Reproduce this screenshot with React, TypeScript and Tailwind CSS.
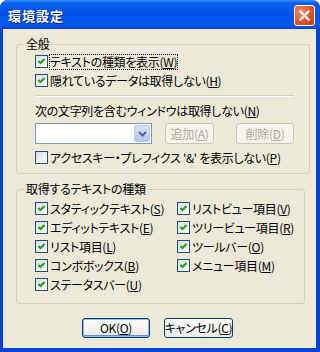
import React from "react";

const font = "[font-family:'Noto_Sans_CJK_JP','Noto_Sans',sans-serif] [font-feature-settings:'palt']";

function Check({ checked }: { checked: boolean }) {
  return (
    <span className="w-[13px] h-[13px] shrink-0 border border-[#1C5180] bg-gradient-to-br from-[#DCDCD7] to-white flex items-center justify-center">
      {checked && (
        <svg width="9" height="9" viewBox="0 0 9 9">
          <polyline points="1.5,4 3.5,6 7.5,2" fill="none" stroke="#21A121" strokeWidth="2.2" />
        </svg>
      )}
    </span>
  );
}

function Label({ text, k, focus }: { text: string; k: string; focus?: boolean }) {
  return (
    <span className={`ml-[2px] leading-[14px] whitespace-nowrap ${focus ? "outline outline-1 outline-dotted outline-black" : ""}`}>
      {text}(<span className="underline underline-offset-[1px]">{k}</span>)
    </span>
  );
}

function Row({ checked, text, k, focus }: { checked: boolean; text: string; k: string; focus?: boolean }) {
  return (
    <div className="h-[19px] flex items-center">
      <Check checked={checked} />
      <Label text={text} k={k} focus={focus} />
    </div>
  );
}

export default function App() {
  return (
    <div className={`w-[320px] h-[352px] bg-white ${font} text-[12px] tracking-[-0.3px] text-black`}>
      <div className="w-full h-full flex flex-col rounded-t-[8px] overflow-hidden bg-[#0842D4]">
        {/* Title bar */}
        <div className="h-[29px] shrink-0 flex items-center pl-[8px] pr-[5px] bg-[linear-gradient(180deg,#3D95FF_0%,#0A5FEE_10%,#0053E6_45%,#0058EE_80%,#0552E0_92%,#003DD7_100%)]">
          <span className="text-white font-bold text-[13px] tracking-[1px] [text-shadow:1px_1px_0_#0A1E8C] leading-none mt-[1px]">環境設定</span>
          <div className="ml-auto w-[21px] h-[21px] rounded-[3px] border border-white bg-[radial-gradient(circle_at_30%_30%,#F08F6A,#E2532C_55%,#C43C1A)] flex items-center justify-center mt-[2px]">
            <svg width="11" height="11" viewBox="0 0 11 11">
              <path d="M1.5 1.5 L9.5 9.5 M9.5 1.5 L1.5 9.5" stroke="white" strokeWidth="2.2" strokeLinecap="square" />
            </svg>
          </div>
        </div>
        {/* Client area */}
        <div className="flex-1 ml-[3px] mr-[4px] mb-[4px] bg-[#ECE9D8] flex flex-col">
          {/* Group 1 */}
          <fieldset className="mt-[8px] ml-[13px] w-[289px] h-[137px] border border-[#D0D0BF] rounded-[3px] pl-[18px] pr-[15px]">
            <legend className="px-[2px] leading-[14px]" style={{ marginLeft: -11 }}>全般</legend>
            <div className="mt-[1px]">
              <Row checked text="テキストの種類を表示" k="W" focus />
              <Row checked text="隠れているデータは取得しない" k="H" />
            </div>
            <div className="mt-[5px] h-[2px] border-t border-[#D0D0BF] border-b border-b-white" />
            <div className="h-[19px] mt-[4px] flex items-center leading-[14px] whitespace-nowrap">
              次の文字列を含むウィンドウは取得しない(<span className="underline underline-offset-[1px]">N</span>)
            </div>
            <div className="mt-[3px] flex items-center">
              <div className="w-[117px] h-[21px] border border-[#7F9DB9] bg-white flex justify-end p-[1px]">
                <div className="w-[16px] h-full rounded-[2px] border border-[#B9CBF5] bg-gradient-to-b from-[#D6E3FC] to-[#B3C8F5] flex items-center justify-center">
                  <svg width="9" height="6" viewBox="0 0 9 6">
                    <polyline points="1,1 4.5,4.5 8,1" fill="none" stroke="#4D6185" strokeWidth="2" />
                  </svg>
                </div>
              </div>
              <div className="ml-[13px] w-[49px] h-[21px] rounded-[3px] border border-[#C9C7BA] bg-[#F5F4EA] text-[#ACA899] flex items-center justify-center whitespace-nowrap leading-none">
                追加(<span className="underline underline-offset-[1px]">A</span>)
              </div>
              <div className="ml-[22px] w-[58px] h-[21px] rounded-[3px] border border-[#C9C7BA] bg-[#F5F4EA] text-[#ACA899] flex items-center justify-center whitespace-nowrap leading-none">
                削除(<span className="underline underline-offset-[1px]">D</span>)
              </div>
            </div>
            <div className="mt-[4px]">
              <Row checked={false} text="アクセスキー・プレフィクス '&' を表示しない" k="P" />
            </div>
          </fieldset>
          {/* Group 2 */}
          <fieldset className="mt-[8px] ml-[13px] w-[289px] h-[122px] border border-[#D0D0BF] rounded-[3px] pl-[18px]" >
            <legend className="px-[2px] leading-[14px]" style={{ marginLeft: -11 }}>取得するテキストの種類</legend>
            <div className="mt-[3px] grid grid-cols-[142px_1fr]">
              <div>
                <Row checked text="スタティックテキスト" k="S" />
                <Row checked text="エディットテキスト" k="E" />
                <Row checked text="リスト項目" k="L" />
                <Row checked text="コンボボックス" k="B" />
                <Row checked text="ステータスバー" k="U" />
              </div>
              <div>
                <Row checked text="リストビュー項目" k="V" />
                <Row checked text="ツリービュー項目" k="R" />
                <Row checked text="ツールバー" k="O" />
                <Row checked text="メニュー項目" k="M" />
              </div>
            </div>
          </fieldset>
          {/* Buttons */}
          <div className="mt-[14px] pl-[79px] flex">
            <div className="w-[68px] h-[20px] rounded-[3px] border border-[#003C74] bg-gradient-to-b from-white to-[#ECEBE6] shadow-[inset_0_0_0_1px_#9DB8F3,inset_0_-1px_0_1px_#5F8CEA] flex items-center justify-center whitespace-nowrap leading-none">
              OK(<span className="underline underline-offset-[1px]">O</span>)
            </div>
            <div className="ml-[14px] w-[69px] h-[20px] rounded-[3px] border border-[#003C74] bg-gradient-to-b from-white to-[#ECEBE6] flex items-center justify-center whitespace-nowrap leading-none">
              キャンセル(<span className="underline underline-offset-[1px]">C</span>)
            </div>
          </div>
        </div>
      </div>
    </div>
  );
}
